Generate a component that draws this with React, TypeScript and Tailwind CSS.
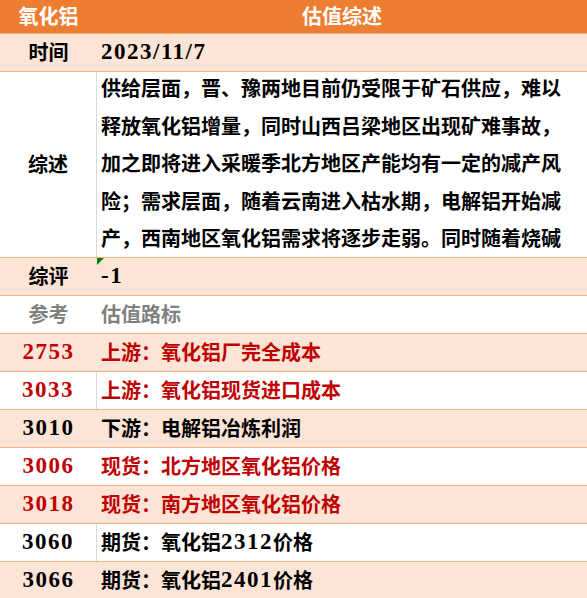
import React from "react"

type Row = {
  label: string
  value: React.ReactNode
  tone?: "red" | "black" | "grey"
  peach: boolean
  divider?: boolean
}

// digits use a wider serif to match the Song-style numerals
const Num = ({ children }: { children: React.ReactNode }) => (
  <span className="font-['Liberation_Serif'] text-[23px] tracking-[1.5px]">{children}</span>
)

const summaryLines = [
  "供给层面，晋、豫两地目前仍受限于矿石供应，难以",
  "释放氧化铝增量，同时山西吕梁地区出现矿难事故，",
  "加之即将进入采暖季北方地区产能均有一定的减产风",
  "险；需求层面，随着云南进入枯水期，电解铝开始减",
  "产，西南地区氧化铝需求将逐步走弱。同时随着烧碱",
]

const priceRows: Row[] = [
  { label: "2753", value: "上游：氧化铝厂完全成本", tone: "red", peach: true },
  { label: "3033", value: "上游：氧化铝现货进口成本", tone: "red", peach: false, divider: true },
  { label: "3010", value: "下游：电解铝冶炼利润", tone: "black", peach: true },
  { label: "3006", value: "现货：北方地区氧化铝价格", tone: "red", peach: false },
  { label: "3018", value: "现货：南方地区氧化铝价格", tone: "red", peach: true },
  {
    label: "3060",
    value: (
      <>
        期货：氧化铝<Num>2312</Num>价格
      </>
    ),
    tone: "black",
    peach: false,
    divider: true,
  },
  {
    label: "3066",
    value: (
      <>
        期货：氧化铝<Num>2401</Num>价格
      </>
    ),
    tone: "black",
    peach: true,
  },
]

const toneClass = {
  red: "text-[#c00000]",
  black: "text-black",
  grey: "text-[#808080]",
}

const TableRow = ({ row, numLabel }: { row: Row; numLabel?: boolean }) => (
  <div
    className={`grid grid-cols-[97px_1fr] h-[38px] border-b border-[#f4b183] ${
      row.peach ? "bg-[#fce4d6]" : "bg-white"
    } ${toneClass[row.tone ?? "black"]}`}
  >
    <div
      className={`flex items-center justify-center ${row.divider ? "border-r border-[#d9d9d9]" : ""}`}
    >
      {numLabel ? <Num>{row.label}</Num> : row.label}
    </div>
    <div className="flex items-center pl-[4px] whitespace-nowrap overflow-hidden">{row.value}</div>
  </div>
)

export default function App() {
  return (
    <div className="w-[587px] h-[598px] overflow-hidden bg-white font-['Liberation_Serif','Noto_Sans_CJK_SC',serif] font-bold text-[20px] text-black">
      {/* header */}
      <div className="grid grid-cols-[97px_1fr] h-[34px] bg-[#ed7d31] border-b border-[#f4b183] text-white">
        <div className="flex items-center justify-center">氧化铝</div>
        <div className="flex items-center justify-center">估值综述</div>
      </div>

      <TableRow
        row={{
          label: "时间",
          value: <Num>2023/11/7</Num>,
          peach: true,
        }}
      />

      {/* summary */}
      <div className="grid grid-cols-[97px_1fr] h-[186px] border-b border-[#f4b183] bg-white">
        <div className="flex items-center justify-center border-r border-[#d9d9d9]">综述</div>
        <div className="pl-[4px] overflow-hidden whitespace-nowrap leading-[37.6px] -mt-[1px]">
          {summaryLines.map((line) => (
            <div key={line}>{line}</div>
          ))}
        </div>
      </div>

      {/* rating */}
      <div className="grid grid-cols-[97px_1fr] h-[38px] border-b border-[#f4b183] bg-[#fce4d6]">
        <div className="flex items-center justify-center">综评</div>
        <div className="relative flex items-center pl-[4px]">
          <span className="absolute left-0 top-0 w-0 h-0 border-t-[7px] border-r-[7px] border-t-[#008000] border-r-transparent" />
          <Num>-1</Num>
        </div>
      </div>

      <TableRow row={{ label: "参考", value: "估值路标", tone: "grey", peach: false }} />

      {priceRows.map((row) => (
        <TableRow key={row.label} row={row} numLabel />
      ))}
    </div>
  )
}
